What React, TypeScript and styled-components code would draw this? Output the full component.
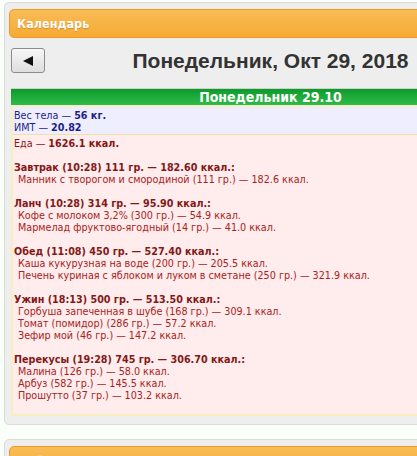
import React from "react";
import styled, { createGlobalStyle } from "styled-components";

const Global = createGlobalStyle`
  html, body { margin: 0; padding: 0; overflow: hidden; background: #fafffa; }
  body { font-family: "DejaVu Sans Condensed", "DejaVu Sans", sans-serif; }
`;

const Page = styled.div`
  width: 560px;
  padding: 2px 0 0 4px;
`;

const Panel = styled.section<{ $gap?: number }>`
  width: 523px;
  margin-top: ${(p) => p.$gap ?? 0}px;
  border: 1px solid #dcdcdc;
  border-radius: 5px;
  background: #eeeeee;
  padding: 6px 4px 8px;
`;

const Header = styled.div`
  height: 27px;
  border: 1px solid #f19a1e;
  border-radius: 5px;
  background: linear-gradient(#f9bc56, #f6aa35);
  display: flex;
  align-items: center;
  padding-left: 7px;
  color: #fff;
  font-weight: bold;
  font-size: 12.5px;
  text-shadow: 0 1px 1px rgba(150, 80, 0, 0.35);
`;

const Body = styled.div`
  margin: 0 2px;
`;

const NavRow = styled.div`
  display: grid;
  grid-template-columns: 1fr auto 1fr;
  align-items: center;
  margin-top: 10px;
  height: 25px;
`;

const BackButton = styled.button`
  justify-self: start;
  width: 34px;
  height: 25px;
  padding: 0;
  border: 1px solid #8c8c8c;
  border-radius: 3px;
  background: linear-gradient(#f7f7f7, #dedede);
  display: flex;
  align-items: center;
  justify-content: center;
`;

const Title = styled.h1`
  margin: 0;
  font-family: "Liberation Sans", Arial, sans-serif;
  font-weight: bold;
  font-size: 21px;
  color: #333;
  white-space: nowrap;
`;

const DayBar = styled.div`
  margin-top: 15px;
  height: 16px;
  border-top: 1px solid #d0d0d0;
  background: linear-gradient(#0c9b2a, #2fbb4b);
  color: #fff;
  font-weight: bold;
  font-size: 14px;
  line-height: 16px;
  text-align: center;
`;

const DayBox = styled.div`
  border: 2px solid #f6efc2;
  font-size: 10.7px;
  line-height: 12px;
`;

const Stats = styled.div`
  background: #eeeeff;
  color: #1e1e88;
  padding: 3px 1px 0;
  border-bottom: 1px solid #eee0a8;
`;

const Food = styled.div`
  background: #ffecec;
  padding: 3px 1px 12px;
  color: #8a1414;
`;

const Line = styled.div`
  white-space: nowrap;
`;

const Meal = styled.div`
  margin-top: 12px;
`;

const MealTitle = styled.div`
  font-weight: bold;
  color: #841818;
  white-space: nowrap;
`;

const Item = styled.div`
  padding-left: 4px;
  color: #a82222;
  white-space: nowrap;
`;

const meals = [
  {
    title: "Завтрак (10:28) 111 гр. — 182.60 ккал.:",
    items: ["Манник с творогом и смородиной (111 гр.) — 182.6 ккал."],
  },
  {
    title: "Ланч (10:28) 314 гр. — 95.90 ккал.:",
    items: [
      "Кофе с молоком 3,2% (300 гр.) — 54.9 ккал.",
      "Мармелад фруктово-ягодный (14 гр.) — 41.0 ккал.",
    ],
  },
  {
    title: "Обед (11:08) 450 гр. — 527.40 ккал.:",
    items: [
      "Каша кукурузная на воде (200 гр.) — 205.5 ккал.",
      "Печень куриная с яблоком и луком в сметане (250 гр.) — 321.9 ккал.",
    ],
  },
  {
    title: "Ужин (18:13) 500 гр. — 513.50 ккал.:",
    items: [
      "Горбуша запеченная в шубе (168 гр.) — 309.1 ккал.",
      "Томат (помидор) (286 гр.) — 57.2 ккал.",
      "Зефир мой (46 гр.) — 147.2 ккал.",
    ],
  },
  {
    title: "Перекусы (19:28) 745 гр. — 306.70 ккал.:",
    items: [
      "Малина (126 гр.) — 58.0 ккал.",
      "Арбуз (582 гр.) — 145.5 ккал.",
      "Прошутто (37 гр.) — 103.2 ккал.",
    ],
  },
];

export default function App() {
  return (
    <>
      <Global />
      <Page>
        <Panel>
          <Header>Календарь</Header>
          <Body>
            <NavRow>
              <BackButton aria-label="Назад">
                <svg width="10" height="10" viewBox="0 0 10 10">
                  <polygon points="0,5 10,0 10,10" fill="#111" />
                </svg>
              </BackButton>
              <Title>Понедельник, Окт 29, 2018</Title>
              <span />
            </NavRow>
            <DayBar>Понедельник 29.10</DayBar>
            <DayBox>
              <Stats>
                <Line>
                  Вес тела — <b>56 кг.</b>
                </Line>
                <Line>
                  ИМТ — <b>20.82</b>
                </Line>
              </Stats>
              <Food>
                <Line>
                  Еда — <b>1626.1 ккал.</b>
                </Line>
                {meals.map((m) => (
                  <Meal key={m.title}>
                    <MealTitle>{m.title}</MealTitle>
                    {m.items.map((it) => (
                      <Item key={it}>{it}</Item>
                    ))}
                  </Meal>
                ))}
              </Food>
            </DayBox>
          </Body>
        </Panel>
        <Panel $gap={14}>
          <Header>Мой дневник</Header>
        </Panel>
      </Page>
    </>
  );
}
